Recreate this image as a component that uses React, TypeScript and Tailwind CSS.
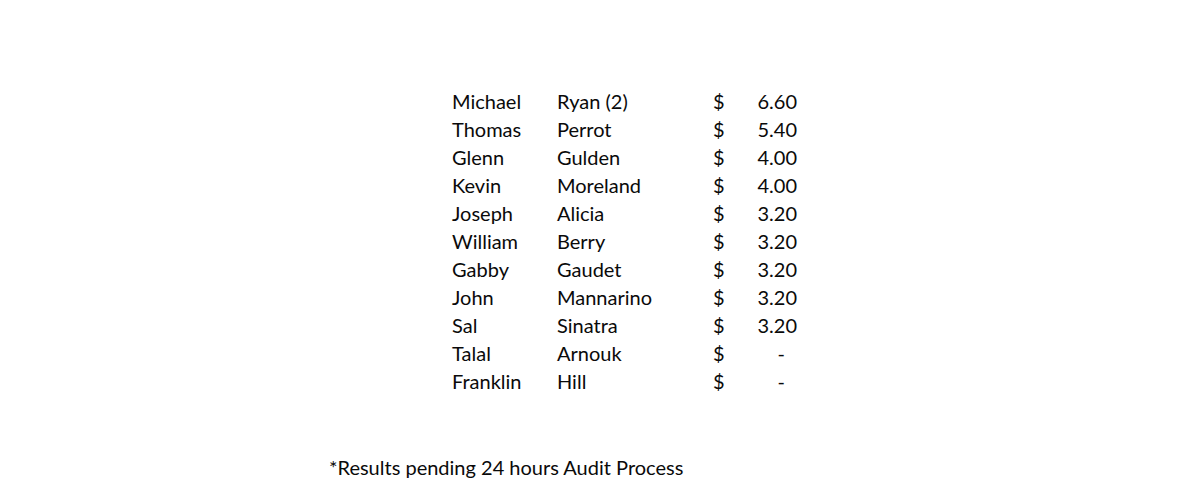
const rows: [string, string, string][] = [
  ["Michael", "Ryan (2)", "6.60"],
  ["Thomas", "Perrot", "5.40"],
  ["Glenn", "Gulden", "4.00"],
  ["Kevin", "Moreland", "4.00"],
  ["Joseph", "Alicia", "3.20"],
  ["William", "Berry", "3.20"],
  ["Gabby", "Gaudet", "3.20"],
  ["John", "Mannarino", "3.20"],
  ["Sal", "Sinatra", "3.20"],
  ["Talal", "Arnouk", "-"],
  ["Franklin", "Hill", "-"],
];

export default function App() {
  return (
    <div
      className="w-[1200px] h-[494px] bg-white text-[#0a0a0a] overflow-hidden"
      style={{ fontFamily: "Lato, 'Open Sans', sans-serif" }}
    >
      <div className="flex flex-col pt-[87px] pl-[452px] text-[20px] leading-[28px]">
        {rows.map(([f, l, a]) => (
          <div key={f} className="flex h-[28px] items-center">
            <div className="w-[105px]">{f}</div>
            <div className="w-[156px]">{l}</div>
            <div className="w-[20px]">$</div>
            <div className={`w-[64px] text-right ${a === "-" ? "pr-[12px]" : ""}`}>{a}</div>
          </div>
        ))}
      </div>
      <div className="pl-[329px] mt-[58px] text-[20px] leading-[28px]">
        *Results pending 24 hours Audit Process
      </div>
    </div>
  );
}
